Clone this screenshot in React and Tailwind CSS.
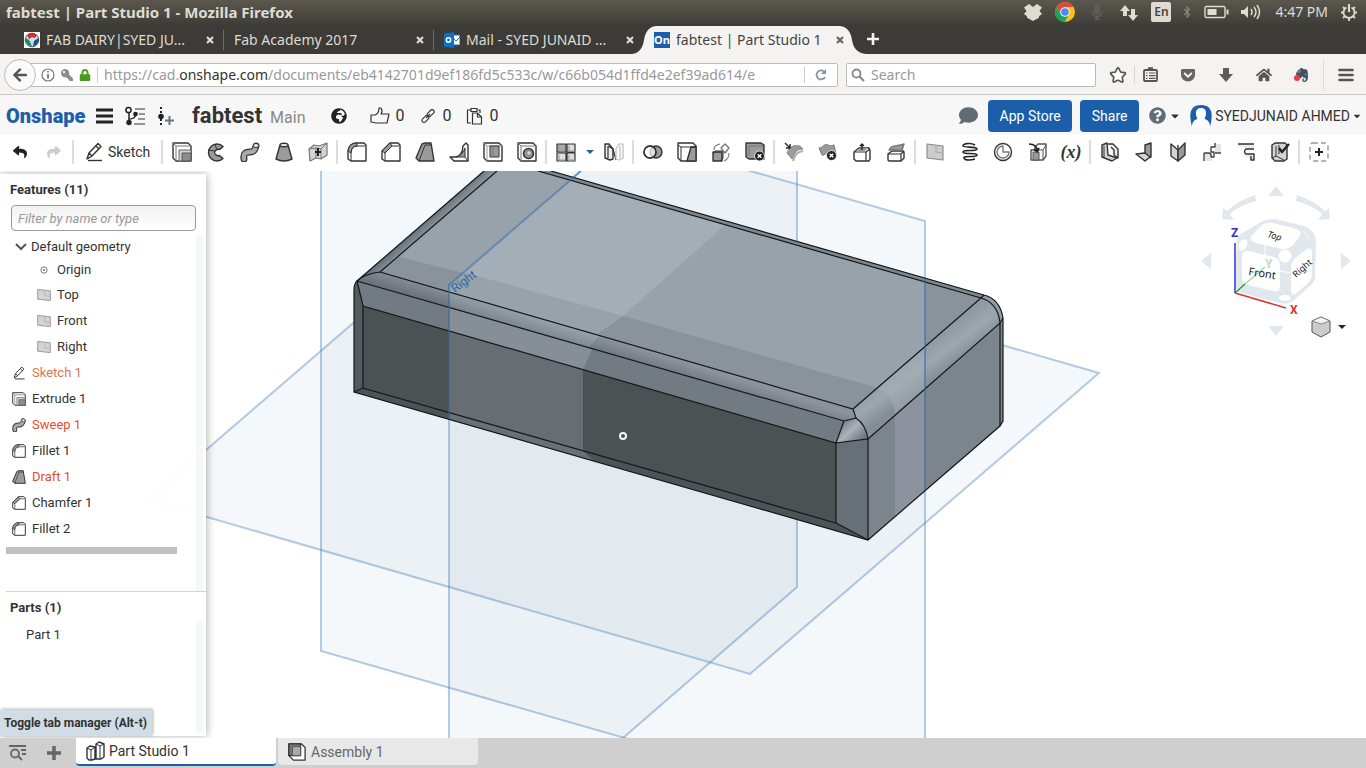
import React, { useState } from "react";
import {
  FaReply, FaShare, FaComment, FaQuestionCircle, FaCaretDown, FaKey, FaLock, FaStar, FaGetPocket,
  FaHome, FaEvernote, FaBluetoothB, FaGlobeAfrica, FaArrowLeft, FaMicrophone,
} from "react-icons/fa";

const G = "#9b9b9b";
const L = "#d4d4d4";

// 20x20 line icon base
const Icon = ({ children, className = "size-5" }) => (
  <svg viewBox="0 0 20 20" className={`${className} shrink-0`} fill="none" stroke="#333" strokeWidth="1.4" strokeLinejoin="round" aria-hidden="true">
    {children}
  </svg>
);

const box = "M1 4V1h15l3 3v15H4l-3-3z";

const icons = {
  sketch: <><path d="M3 17 5 11 14 1.5l3 3L8 14z M5 11l3 3M12 4l3 3" /><path d="M4 18.5h14" /></>,
  extrude: <><path d={box} fill="#fff" /><path d="M4 19V4h15M1 1l3 3" stroke="#777" strokeWidth="1" /><path d="M7 8h12v11H7z" fill={L} stroke="#666" strokeWidth="1" /><path d="M10 11h9v8h-9z" fill="#8c8c8c" stroke="#555" strokeWidth="1" /></>,
  revolve: <><path d="M17 4.500A8.500 8.500 0 1 0 17 16.500l-3.500-3a3.800 3.800 0 0 1-5-3 3.800 3.800 0 0 1 5-3z" fill={G} /><path d="M9 2l1.500 5M17 4.500l-3 3M2 8l6.500 1" strokeWidth="1" /></>,
  sweep: <><path d="M4 17c-1-6 2-7 6-7s5-2 6-6" strokeWidth="7" strokeLinecap="round" /><path d="M4 17c-1-6 2-7 6-7s5-2 6-6" stroke="#aaa" strokeWidth="4.400" strokeLinecap="round" /><ellipse cx="16" cy="3.500" rx="2.600" ry="2" fill="#eee" strokeWidth="1" /></>,
  loft: <><path d="M6 3 2 17q8 4 16 0L14 3" fill={G} /><ellipse cx="10" cy="3" rx="4" ry="1.800" fill="#eee" /></>,
  thicken: <><path d="M1 7l5-4 5 1 8-3v12l-6 4-5-1-6 3z" fill={L} stroke="#777" strokeWidth="1.200" /><path d="M1 7l7-1 5 1 6-6M8 6v10M13 7v10" stroke="#777" strokeWidth="1" /><path d="M10 6v8M7 10h6" stroke="#222" strokeWidth="2" /></>,
  fillet: <><path d="M1 9q1-8 9-8h7l2 2v16H4l-3-2z" fill="#fff" /><path d="M4 19v-8q0-7 7-7h7" strokeWidth="1" /><path d="M1 9q1-8 9-8v3q-6 0-6 7z" fill={G} strokeWidth="1" /></>,
  chamfer: <><path d="M1 9 9 1h8l2 2v16H4l-3-2z" fill="#fff" /><path d="M4 19v-8l7-7h7" strokeWidth="1" /><path d="M1 9 9 1l2 3-7 7z" fill={G} strokeWidth="1" /></>,
  draft: <><path d="M1 16 7 2l3-1h6l3 18H4z" fill={G} /><path d="M4 19 10 3h6M1 16l3 3" strokeWidth="1" /></>,
  rib: <><path d="M14 4l3-3 2 2v16H5l-4-4h5c4 0 8-4 8-11z" fill="#fff" /><path d="M16 6v9H7q7-2 9-9z" fill={G} strokeWidth="1" /><path d="M16 15l3 4" strokeWidth="1" /></>,
  shell: <><path d={box} fill="#fff" /><path d="M4 19V4h15M1 1l3 3" stroke="#999" strokeWidth="1" /><path d="M7 4h9v11H7z" fill={G} strokeWidth="1" /><path d="M10 4v11" strokeWidth="1" stroke="#777" /></>,
  hole: <><path d={box} fill="#fff" /><path d="M4 19V4h15M1 1l3 3" stroke="#777" strokeWidth="1" /><circle cx="11.500" cy="11.500" r="5" fill={G} strokeWidth="1.600" /><circle cx="12" cy="11" r="2.500" fill={L} stroke="#777" strokeWidth="1" /></>,
  pattern: <><g fill="#ddd" strokeWidth="1.200"><path d="M1 2h9v8H1z" fill="#aaa" /><path d="M11 2h8v8h-8zM1 11h9v8H1zM11 11h8v8h-8z" /></g><path d="M3 4v5h6M13 4v5h6M3 13v5h6M13 13v5h6" stroke="#999" strokeWidth="1" /></>,
  mirror: <><path d="M1 2h4l4 5v10l-3 1-5-2z" fill="#eee" /><path d="M4 4v12M4 4l5 3M9 7l3 11" strokeWidth="1.200" /><path d="M19 2h-4l-3 5v10l3 1 4-2zM16 4v12" fill="#fff" stroke="#bbb" strokeWidth="1.200" /></>,
  boolean: <><circle cx="13" cy="10" r="6" fill={G} /><circle cx="7" cy="10" r="6" fill="#fff" fillOpacity=".7" /><circle cx="7" cy="10" r="6" /></>,
  split: <><path d={box} fill="#fff" /><path d="M14 5h5v14H10z" fill={G} /><path d="M4 19V5h14l1-2M4 5 1 3" strokeWidth="1" /></>,
  transform: <><path d="M2 10h9v9H2z" fill={G} /><path d="M2 12l2-3h8v7l-2 3" strokeWidth="1" /><path d="M14 2l4 4-4 5-4-5z" fill="#fff" stroke="#777" /><path d="M3 8q0-5 6-6M18 11q0 6-5 8" stroke="#777" strokeWidth="1.100" /></>,
  delete: <><path d="M1 3V1h15l3 2v14H4l-3-2z" fill={G} /><path d="M4 14V4h14" stroke="#777" strokeWidth="1" /><circle cx="14.500" cy="14" r="5" fill="#222" stroke="#fff" strokeWidth=".8" /><path d="M12.700 12.200l3.600 3.600M16.300 12.200l-3.600 3.600" stroke="#fff" /></>,
  bridge: <><path d="M3 11c3-7 6-8 13-7l3 3c-6 0-8 3-11 10z" fill={G} stroke="#888" strokeWidth="1" /><path d="M9 19c2-7 4-9 10-10" stroke="#aaa" strokeWidth="2" /><path d="M1 1l5 5M6 2v4H2" stroke="#222" /></>,
  surfDelete: <><path d="M1 6c4 0 5-5 9-3s6-1 6 0l2 9c-5 0-6-2-9-1s-3 3-5 2z" fill={G} stroke="#777" strokeWidth="1" /><circle cx="13.500" cy="13.500" r="5" fill="#222" stroke="#fff" strokeWidth=".8" /><path d="M11.700 11.700l3.600 3.600M15.300 11.700l-3.600 3.600" stroke="#fff" /></>,
  moveFace: <><path d="M2 10l5-4h10l1 3v8l-1 2H4l-2-2z" fill="#fff" /><path d="M2 10h12l4-3M14 10v9" strokeWidth="1.200" /><path d="M5 9l4-3h7l-3 3z" fill={G} stroke="none" /><path d="M10 8V2M8 4l2-2 2 2" stroke="#222" /></>,
  replace: <><path d="M2 12l4-3h11l1 1v6l-3 3H3l-1-1z" fill="#fff" /><path d="M2 12h13l3-3M15 12v7" strokeWidth="1.200" /><path d="M3 8c3-6 7-3 15-6l-2 6c-5 1-7-1-13 0z" fill={G} stroke="#777" /></>,
  plane: <><path d="M2 2l16 2v14L2 16z" fill="#ccc" stroke="#888" strokeWidth="1.100" /><path d="M11 4v6l7 1" stroke="#aaa" strokeWidth="1" /></>,
  helix: <path d="M16 3c-5-3-13-1-12 1s14 0 14 3-14 0-14 3 14 0 14 3-14 0-13 3 8 2 11 1" stroke="#222" strokeWidth="1.600" />,
  curve: <><circle cx="10" cy="10" r="8.500" /><path d="M10 4v6h6a6 6 0 1 1-6-6z" stroke="#777" /></>,
  derived: <><path d="M4 8h4V5l3-3h8v12l-3 4H4z" fill="#fff" stroke="#555" /><path d="M8 8h8v10M16 8l3-5" stroke="#555" strokeWidth="1" /><path d="M6 10h6v8H6z" fill={G} stroke="#555" strokeWidth="1" /><path d="M2 2c5 0 8 2 8 7M7 7l3 3 2-4" stroke="#222" strokeWidth="1.700" /></>,
  sheet: <><path d="M2 3l5-2 1 12 9 3-5 3-10-4z" fill={L} /><path d="M8 2h5l5 5v9l-4-3V8l-3-3" fill="#eee" /><path d="M4 4v11" strokeWidth="1" /></>,
  flange: <><path d="M11 3l6-2v14l-6 2z" fill="#999" /><path d="M2 12l9-1 5 4-5 4z" fill={L} /></>,
  hem: <><path d="M3 2l7 6v11l-7-5z" fill={L} /><path d="M10 8l7-7v12l-7 6z" fill="#999" /><path d="M10 8V3" /></>,
  tab: <><path d="M3 10h7v9H3zM13 2h6v9h-6z" fill="#e5e5e5" stroke="none" /><path d="M2 11h4q4 0 3 4h3v-5h-3V5h4V1M2 19v-8M13 11h6" stroke="#444" /></>,
  flat: <><path d="M2 2h16v5H9v5h9v6h-4l-2-3H8V5H2z" fill="#ebebeb" stroke="none" /><path d="M2 2h16M18 7H10q-3 3 0 5h8v6h-3v-4" stroke="#333" /></>,
  finish: <><path d="M2 3l3-2h10l2 2v14l-3 2H5l-3-3z" fill={L} /><path d="M6 4v10l8 4M6 14l-4 2M9 3v9" strokeWidth="1" /><path d="M9 6l3 4 7-8" stroke="#222" strokeWidth="2.400" /></>,
};

const groups = [
  ["extrude", "revolve", "sweep", "loft", "thicken"],
  ["fillet", "chamfer", "draft", "rib", "shell", "hole"],
  ["pattern", "caret", "mirror"],
  ["boolean", "split", "transform", "delete"],
  ["bridge", "surfDelete", "moveFace", "replace"],
  ["plane", "helix", "curve", "derived", "variable"],
  ["sheet", "flange", "hem", "tab", "flat", "finish"],
];

const Sep = () => <div className="ml-px mr-0.5 h-6 w-0.5 shrink-0 bg-[#dcdcdc]" />;

const features = [
  { icon: "sketch", name: "Sketch 1", color: "text-[#e8704e]" },
  { icon: "extrude", name: "Extrude 1" },
  { icon: "sweep", name: "Sweep 1", color: "text-[#e0502c]" },
  { icon: "fillet", name: "Fillet 1" },
  { icon: "draft", name: "Draft 1", color: "text-[#e0502c]" },
  { icon: "chamfer", name: "Chamfer 1" },
  { icon: "fillet", name: "Fillet 2" },
];

const TitleBar = () => (
  <div className="flex h-6 shrink-0 items-center gap-3 bg-linear-to-b from-[#5b584d] to-[#3f3e39] pl-1.5 pr-2 font-['Noto_Sans',sans-serif] text-[#dfdbd2]">
    <h1 className="flex-1 truncate text-[15px] font-bold leading-5">fabtest | Part Studio 1 - Mozilla Firefox</h1>
    <svg viewBox="0 0 20 20" className="size-5" fill="currentColor">
      <path d="M6 2l4 3 4-3 5 3.500L16.500 9l2.500 3-3 2.200v1.600L10 19l-6-3.200v-1.600L1 12l2.500-3L1 5.500z" />
    </svg>
    <svg viewBox="0 0 20 20" className="size-5">
      <circle cx="10" cy="10" r="10" fill="#fbc116" />
      <path d="M1.400 5A10 10 0 0 1 18.700 5H10L5.700 12.500z" fill="#dd4b3e" />
      <path d="M1.400 5A10 10 0 0 0 9.500 20l4.500-7.500H5.700z" fill="#1ba261" />
      <circle cx="10" cy="10" r="4.800" fill="#f4f4f4" />
      <circle cx="10" cy="10" r="3.800" fill="#4a8af4" />
    </svg>
    <FaMicrophone className="h-4 w-5 text-[#5f5d57]" />
    <svg viewBox="0 0 20 20" className="size-5" fill="currentColor">
      <path d="M6 3 1 9h3v5h4V9h3zM14 19l5-6h-3V7h-4v6H9z" />
    </svg>
    <span className="flex size-5 items-center justify-center rounded-xs bg-[#dfdbd2] text-xs font-semibold text-[#45443f]">En</span>
    <FaBluetoothB className="h-4 w-2 text-[#8b8880]" />
    <svg viewBox="0 0 26 14" className="h-3.5 w-[26px]" fill="none" stroke="currentColor" strokeWidth="1.400">
      <rect x="2" y="1.500" width="20" height="11" rx="1.500" />
      <path d="M24.500 4.500v5" strokeWidth="2" />
      <path d="M4.500 4h9v6h-9z" fill="currentColor" stroke="none" />
    </svg>
    <svg viewBox="0 0 20 18" className="h-4.5 w-5" fill="none" stroke="currentColor" strokeWidth="1.500">
      <path d="M0 7h3l4-4v12l-4-4H0z" fill="currentColor" stroke="none" />
      <path d="M10 6q2 3 0 6M13 4q4 5 0 10M16 2q5 7 0 14" />
    </svg>
    <time className="ml-0.5 text-sm">4:47 PM</time>
    <svg viewBox="0 0 18 18" className="size-4.5" fill="none" stroke="currentColor">
      <path d="M6.500 4.500A5.500 5.500 0 1 0 11.500 4.500" strokeWidth="1.800" />
      <path d="M9 1v8" strokeWidth="2" />
      <path d="M1 9.500h3M14 9.500h3M3 4l2 2M15 4l-2 2M3 15l2-2M15 15l-2-2M9 15v3" strokeWidth="1.800" />
    </svg>
  </div>
);

const browserTabs = [
  { title: "FAB DAIRY|SYED JU...", fav: "fab" },
  { title: "Fab Academy 2017" },
  { title: "Mail - SYED JUNAID ...", fav: "mail" },
  { title: "fabtest | Part Studio 1", fav: "on", active: true },
];

const Favicon = ({ kind }) => {
  if (kind === "fab")
    return (
      <svg viewBox="0 0 16 16" className="size-4 shrink-0">
        <path d="M0 0h16v16H0z" fill="#fff" />
        <circle cx="8" cy="8" r="6.800" fill="#cde" stroke="#356" />
        <path d="M3 3q5-4 10 0l-2 3-3-1-3 2z" fill="#d92b2b" />
        <path d="M1.500 6 5 8l3 6q-6 0-6.500-8z" fill="#178a55" />
        <path d="M14.500 6 10 9l-1 5q6-1 5.500-8z" fill="#1f4f80" />
      </svg>
    );
  if (kind === "mail")
    return (
      <svg viewBox="0 0 16 16" className="size-4 shrink-0">
        <path d="M8 3h8v10H8z" fill="#fff" stroke="#0a72c6" />
        <path d="M8 5l4 4 4-4" fill="none" stroke="#0a72c6" />
        <path d="M0 1.500 10 0v16L0 14.500z" fill="#0a72c6" />
        <circle cx="4.500" cy="8" r="2.200" fill="none" stroke="#fff" strokeWidth="1.500" />
      </svg>
    );
  return <span className="flex size-4 shrink-0 items-center justify-center bg-[#1b5faa] text-[11px] font-bold text-white">On</span>;
};

const TabStrip = () => (
  <div className="flex h-[30px] shrink-0 items-end bg-[#3c3b37] pl-3.5 font-['Noto_Sans',sans-serif] text-sm text-[#dfdbd2]">
    {browserTabs.map((t, i) => (
      <div key={t.title} className="relative flex h-7 w-[210px] items-center gap-1.5 px-2.5">
        {t.active && (
          <svg viewBox="0 0 234 28" preserveAspectRatio="none" className="absolute -left-3 top-0 h-full w-[234px]" aria-hidden="true">
            <path d="M0 28q10-1 12-14T24 0h184q10 1 12 14t14 14z" fill="#f4f3f2" />
          </svg>
        )}
        {t.fav && <span className="relative"><Favicon kind={t.fav} /></span>}
        <span className={`relative flex-1 overflow-hidden whitespace-nowrap ${t.active ? "text-[#444]" : ""}`}>{t.title}</span>
        <button aria-label={`Close ${t.title}`} className={`relative ${t.active ? "text-[#666]" : ""}`}>
          <svg viewBox="0 0 8 8" className="size-2" stroke="currentColor" strokeWidth="2.200"><path d="M1 1l6 6M7 1 1 7" /></svg>
        </button>
        {i < 2 && <span className="absolute right-0 top-1 h-5 w-px bg-[#6f6e69]" />}
      </div>
    ))}
    <button aria-label="New tab" className="mb-2 ml-3">
      <svg viewBox="0 0 14 14" className="size-3.5" stroke="#f4f3f2" strokeWidth="2.600"><path d="M7 1v12M1 7h12" /></svg>
    </button>
  </div>
);

const NavBar = () => (
  <div className="flex h-[41px] shrink-0 items-center border-b border-[#c8c8c6] bg-[#f4f3f2] pl-1 pr-3 pt-px font-['Noto_Sans',sans-serif] text-sm text-[#555]">
    <button aria-label="Back" className="z-10 flex size-8 shrink-0 items-center justify-center rounded-full border border-[#bbb] bg-[#fafafa]">
      <FaArrowLeft className="size-4" />
    </button>
    <div className="-ml-2 flex h-6 min-w-0 flex-1 items-center rounded-r-xs border border-[#bbb] bg-white pl-3">
      <svg viewBox="0 0 14 14" className="size-3.5 shrink-0" fill="none" stroke="#777" strokeWidth="1.200">
        <circle cx="7" cy="7" r="6" />
        <path d="M7 6v4.500M7 3v1.500" strokeWidth="1.800" />
      </svg>
      <FaKey className="ml-1.5 size-3 shrink-0 -scale-x-100 text-[#8c8c8c]" />
      <FaLock className="ml-1.5 size-3 shrink-0 text-[#4c9a22]" />
      <span className="ml-1.5 h-4 w-px shrink-0 bg-[#ccc]" />
      <div role="textbox" aria-label="Address" contentEditable suppressContentEditableWarning className="ml-1.5 min-w-0 flex-1 overflow-hidden whitespace-nowrap text-[#999] outline-none">
        https://cad.<span className="text-[#333]">onshape.com</span>/documents/eb4142701d9ef186fd5c533c/w/c66b054d1ffd4e2ef39ad614/e
      </div>
      <span className="ml-6 h-4 w-px shrink-0 bg-[#ccc]" />
      <button aria-label="Reload" className="px-2.5">
        <svg viewBox="0 0 12 12" className="size-3" fill="none" stroke="#8795a1" strokeWidth="1.800">
          <path d="M10 8A4.500 4.500 0 1 1 9 2.500" />
          <path d="M11 0v5H6z" fill="#8795a1" stroke="none" />
        </svg>
      </button>
    </div>
    <label className="ml-2 flex h-6 w-[250px] items-center gap-1.5 rounded-xs border border-[#bbb] bg-white pl-1">
      <svg viewBox="0 0 14 14" className="size-3.5" fill="none" stroke="#888" strokeWidth="1.800"><circle cx="5.500" cy="5.500" r="4" /><path d="M8.500 8.500 13 13" strokeWidth="2.200" /></svg>
      <input aria-label="Search" placeholder="Search" className="min-w-0 flex-1 outline-none placeholder:text-[#999]" />
    </label>
    <button aria-label="Bookmark" className="ml-3.5">
      <FaStar className="size-4 overflow-visible fill-white stroke-[#555] stroke-[60px]" />
    </button>
    <span className="ml-2 h-4.5 w-px bg-[#d5d5d5]" />
    <button aria-label="Bookmarks list" className="ml-2">
      <svg viewBox="0 0 15 15" className="size-[15px]" fill="none" stroke="#555" strokeWidth="1.800">
        <rect x="1" y="3" width="13" height="11" rx="1" />
        <path d="M5 1.500h5" strokeWidth="2.500" />
        <path d="M3 6h1.500M6 6h6.500M3 8.700h1.500M6 8.700h6.500M3 11.300h1.500M6 11.300h6.500" strokeWidth="1.200" />
      </svg>
    </button>
    <button aria-label="Pocket" className="ml-[22px]"><FaGetPocket className="size-4 text-[#666]" /></button>
    <button aria-label="Downloads" className="ml-[22px]">
      <svg viewBox="0 0 16 16" className="size-4" fill="#5c5c5c"><path d="M5 1h6v6h4l-7 8-7-8h4z" /></svg>
    </button>
    <button aria-label="Home" className="ml-[22px]"><FaHome className="size-4" /></button>
    <button aria-label="Evernote" className="relative ml-[22px]">
      <FaEvernote className="size-4 text-[#44535b]" />
      <span className="absolute bottom-0.5 left-0 size-1.5 rounded-full bg-[#fb3449]" />
    </button>
    <span className="ml-[13px] h-8 w-px bg-[#dcdcdc]" />
    <button aria-label="Menu" className="ml-3.5">
      <svg viewBox="0 0 16 14" className="h-3.5 w-4" stroke="#555" strokeWidth="2.600" strokeLinecap="round"><path d="M1.500 2h13M1.500 7h13M1.500 12h13" /></svg>
    </button>
  </div>
);

const DocHeader = () => (
  <header className="flex h-10 shrink-0 items-center bg-[#f7f7f7] pl-1.5 pr-1 pt-px text-[#333]">
    <a href="#" className="w-[78px] text-xl font-black leading-6 text-[#1b5faa]">Onshape</a>
    <button aria-label="Menu" className="ml-3">
      <svg viewBox="0 0 17 16" className="h-4 w-[17px]" stroke="#222" strokeWidth="3"><path d="M0 2h17M0 8h17M0 14h17" /></svg>
    </button>
    <button aria-label="Versions" className="ml-3">
      <svg viewBox="0 0 20 20" className="size-5" fill="none" stroke="#222" strokeWidth="1.500">
        <circle cx="3.500" cy="4" r="2.600" /><circle cx="10.500" cy="8" r="1.600" fill="#222" /><circle cx="4" cy="16.500" r="2" fill="#222" />
        <path d="M4 7v8M4 13q6 0 6.500-4" /><path d="M10 3h10M14 8h6M13 13h7M9 18h11" stroke="#667784" />
      </svg>
    </button>
    <button aria-label="Create version" className="ml-3">
      <svg viewBox="0 0 17 20" className="h-5 w-[17px]" fill="none" stroke="#222" strokeWidth="2">
        <path d="M4 1v19" strokeDasharray="2 2" /><circle cx="4" cy="10.500" r="2.800" fill="#222" stroke="none" /><path d="M12.500 10v9M8 14.500h9" stroke="#667784" />
      </svg>
    </button>
    <h2 className="ml-[18px] text-[22px] font-bold leading-7">fabtest</h2>
    <span className="ml-2 mt-1 text-base text-[#888]">Main</span>
    <FaGlobeAfrica className="ml-[25px] size-4 text-[#222]" />
    <button aria-label="Likes" className="ml-[23px] flex items-center gap-1.5 text-base">
      <Icon><path d="M1 9h4c3-1 4-4 4-7h2q2 3 0 6h8l-2 9H6l-5-1z" strokeWidth="1.200" /></Icon>0
    </button>
    <button aria-label="Links" className="ml-4 flex items-center gap-2 text-base">
      <svg viewBox="0 0 14 14" className="size-3.5" fill="none" stroke="#333" strokeWidth="1.100"><rect x="5.500" y="2" width="8" height="4" rx="2" transform="rotate(-45 9.700 3.800)" /><rect x="0.300" y="8" width="8" height="4" rx="2" transform="rotate(-45 4.300 9.800)" /><path d="M5 9l4-4" /></svg>0
    </button>
    <button aria-label="Copies" className="ml-3.5 flex items-center gap-1.5 text-base">
      <svg viewBox="0 0 18 18" className="size-[18px]" fill="none" stroke="#333" strokeWidth="1.200"><path d="M5 16H1.500V3h3M12 3h2v3M5 1.500h6v3H5zM6.500 6h5l4 4v7h-9zM11.500 6v4h4" /></svg>0
    </button>
    <div className="flex-1" />
    <button aria-label="Comments"><FaComment className="size-[19px] text-[#5f6c76]" /></button>
    <button className="ml-2.5 h-8 w-21 rounded bg-[#1b5faa] text-sm text-white">App Store</button>
    <button className="ml-2 h-8 w-[59px] rounded bg-[#1b5faa] text-sm text-white">Share</button>
    <button aria-label="Help" className="ml-2.5 flex items-center gap-[3px]">
      <FaQuestionCircle className="size-[17px] text-[#5f6c76]" /><FaCaretDown className="size-3" />
    </button>
    <button className="ml-2 flex items-center gap-0.5 text-sm">
      <svg viewBox="0 0 24 24" className="size-6"><path d="M3 23q-6-22 9-22t9 22z" fill="#1b5faa" /><path d="M12 4c6 0 6 6 3.500 11 4 1 5 3 6 9H2.500c1-6 2-8 6-9C6 10 6 4 12 4z" fill="#fff" /></svg>
      <span>SYEDJUNAID AHMED</span><FaCaretDown className="size-2.5" />
    </button>
  </header>
);

const Toolbar = () => (
  <div className="flex h-9 shrink-0 items-center bg-white pb-0.5 pl-[3px]">
    <button aria-label="Undo" className="flex w-[34px] justify-center"><FaReply className="size-3.5 text-[#222]" /></button>
    <button aria-label="Redo" className="flex w-[34px] justify-center"><FaShare className="size-3.5 text-[#ccc]" /></button>
    <Sep />
    <button className="flex w-21 items-center gap-1 pl-2 text-sm text-[#333]"><Icon>{icons.sketch}</Icon>Sketch</button>
    {groups.map((g, i) => (
      <React.Fragment key={i}>
        <Sep />
        {g.map((n) =>
          n === "caret" ? (
            <button key={n} aria-label="More patterns" className="flex w-3.5 justify-center">
              <svg viewBox="0 0 8 4" className="h-1 w-2"><path d="M0 0h8L4 4z" fill="#1b5faa" /></svg>
            </button>
          ) : (
            <button key={n} aria-label={n} className="flex w-[34px] justify-center">
              {n === "variable" ? <span className="font-['Liberation_Serif',serif] text-lg font-bold italic leading-5 text-[#333]">(x)</span> : <Icon>{icons[n]}</Icon>}
            </button>
          )
        )}
      </React.Fragment>
    ))}
    <Sep />
    <button aria-label="Add custom feature" className="flex w-[34px] justify-center">
      <Icon><rect x="1" y="1" width="18" height="18" rx="3" stroke="#999" strokeDasharray="5 3" /><path d="M10 6v8M6 10h8" stroke="#222" strokeWidth="2" /></Icon>
    </button>
  </div>
);

const Model = () => (
  <svg viewBox="0 171 1366 567" preserveAspectRatio="xMidYMid slice" className="col-start-1 row-start-1 size-full min-h-0" role="img" aria-label="Part model">
    <defs>
      <linearGradient id="band" gradientUnits="userSpaceOnUse" x1="600" y1="336" x2="595" y2="352">
        <stop offset="0" stopColor="#8b949b" /><stop offset="1" stopColor="#6c757d" />
      </linearGradient>
      <linearGradient id="bandLight" gradientUnits="userSpaceOnUse" x1="600" y1="336" x2="595" y2="352">
        <stop offset="0" stopColor="#98a3ab" /><stop offset="1" stopColor="#7d868e" />
      </linearGradient>
      <linearGradient id="side" gradientUnits="userSpaceOnUse" x1="415" y1="231" x2="424" y2="241">
        <stop offset="0" stopColor="#69737b" /><stop offset="1" stopColor="#97a2aa" />
      </linearGradient>
      <linearGradient id="round" gradientUnits="userSpaceOnUse" x1="914" y1="353" x2="934" y2="380">
        <stop offset="0" stopColor="#8f99a1" /><stop offset=".5" stopColor="#9ca7af" /><stop offset="1" stopColor="#858e96" />
      </linearGradient>
      <linearGradient id="corner" gradientUnits="userSpaceOnUse" x1="845" y1="424" x2="860" y2="440">
        <stop offset="0" stopColor="#858c94" /><stop offset=".4" stopColor="#abb2bb" /><stop offset="1" stopColor="#727a82" />
      </linearGradient>
    </defs>

    <g fill="#5082a8" fillOpacity=".057" stroke="#3c78be" strokeOpacity=".38" strokeWidth="2">
      <path d="M148 500 497 199 1099 373 750 674z" />
      <path d="M321 48v603l604 173V221z" />
      <path d="M449 285 797-17v604L449 889z" />
    </g>

    {/* solid */}
    <path d="M357 281 484 171h67l433 124q16 4 19 23v103l-3 5-132 114-514-148V290q0-6 3-9z" fill="#7c848c" />
    <path d="M357 281 484 171h13L380 272z" fill="url(#side)" />
    <path d="M380 272 497 171h41l443 127-128 111z" fill="#98a2aa" />
    <path d="M463 272 570 180l155 45-102 91z" fill="#a3aeb6" />
    <path d="M396 256l67 17-14 12v7l-69-20zM623 316l255 72-25 21-257-74zM925 282l56 16-56 48z" fill="#8a939b" />
    <path d="M538 171h13l433 124-3 3z" fill="#7e8890" />
    <path d="M380 272 853 409l3 9-12 3-487-140q7-7 23-9z" fill="url(#band)" />
    <path d="M449 292l151 43-12 13-139-40z" fill="url(#bandLight)" />
    <path d="M357 281 844 421l-8 22-473-137z" fill="#727a82" />
    <path d="M449 308l143 41-9 21-134-39z" fill="#868e97" />
    <path d="M363 306l473 137v80L363 388z" fill="#4c5154" />
    <path d="M449 331l134 39v81l-134-38z" fill="#686c73" />
    <path d="M357 281l6 25v82l-9 4V290z" fill="#555a5e" />
    <path d="M354 392l9-4 473 135 32 17z" fill="#4e5357" />
    <path d="M449 413l134 38 11 10-145-42z" fill="#6b7077" />
    <path d="M836 443l32-4v101l-32-17z" fill="#687077" />
    <path d="M836 443l8-22 12-3q10 7 12 21z" fill="url(#corner)" />
    <path d="M853 409 981 298q17 5 19 25L868 439q-2-14-12-21z" fill="url(#round)" />
    <path d="M878 388 925 347v42l-30 25q-2-19-17-26z" fill="#a8b4bc" fillOpacity=".45" />
    <path d="M981 298l3-3q16 4 19 23l-3 5q-2-20-19-25z" fill="#929ca4" />
    <path d="M895 416l30-26v100l-30 26z" fill="#8c939e" />

    <g fill="none" stroke="#14181b" strokeWidth="1.200">
      <path d="M484 171 357 281q-3 3-3 9v102l514 148 132-114 3-5V318q-3-19-19-23L551 171" />
      <path d="M497 171 380 272 853 409 981 298 538 171M380 272q-16 2-23 9l487 140 12-3-3-9" />
      <path d="M357 281l6 25 473 137 8-22M363 306v82l473 135v-80l32-4v101M354 392l9-4M836 523l32 17" />
      <path d="M856 418q10 7 12 21l132-116v103M981 298l3-3M981 298q17 5 19 25l3-5" />
    </g>

    <g fill="none" stroke="#2c66a8" strokeOpacity=".5" strokeWidth="2">
      <path d="M581 171 449 285v134M925 279v211" />
    </g>
    <text x="455" y="293" transform="rotate(-37 455 293)" fill="#2d69ae" className="text-xs">Right</text>
    <circle cx="623" cy="436" r="3" fill="#4c5154" stroke="#f5f5f0" strokeWidth="2" />
  </svg>
);

const ViewCube = () => (
  <svg viewBox="0 0 160 160" className="col-start-1 row-start-1 mr-3 mt-2.5 size-40 justify-self-end" role="img" aria-label="View cube">
    <g fill="#e1e8ed">
      <path d="M82 5l8 10H74zM82 155l8-10H74zM7 80l10-8v16zM157 80l-10-8v16z" />
      <path d="M61 14l1 6q-18 5-26 13l4 6-12-1 1-11 4 3q10-10 28-16zM103 14l-1 6q18 5 26 13l-4 6 12-1-1-11-4 3q-10-10-28-16z" />
      <path d="M43 61q0-7 7-10l19-11q5-2 12-2l29 7q11 4 12 15l-1 36q0 5-5 9l-17 15q-5 4-13 2l-39-10q-6-3-6-9z" />
    </g>
    <g fill="#fff">
      <path d="M58 54l9-9q4-4 12-3l24 6q6 3 2 8l-6 8q-5 5-12 4l-25-6q-8-3-4-8z" />
      <path d="M48 76q0-7 7-6l25 6q6 2 6 8v21q0 7-7 5l-25-6q-6-2-6-8z" />
      <path d="M97 87q0-6 4-10l12-9q5-2 5 4v21q0 5-4 9l-11 10q-6 4-6-4z" />
      <circle cx="91" cy="75" r="6.500" /><ellipse cx="49" cy="64" rx="4" ry="6" transform="rotate(25 49 64)" /><ellipse cx="91" cy="117" rx="6" ry="3" />
    </g>
    <path d="M71 62v12M86 90l11 2M109 50l7 8" stroke="#fff" />
    <path d="M41 112V62" stroke="#3030e0" strokeWidth="1.500" />
    <path d="M41 112l51 15" stroke="#e03030" strokeWidth="1.500" />
    <path d="M41 112l10-9" stroke="#28a028" strokeWidth="1.500" />
    <path d="M51 103l20-17" stroke="#a5dba5" strokeWidth="1.500" />
    <g className="text-xs font-bold">
      <text x="37" y="56" fill="#3030e0">Z</text>
      <text x="96" y="133" fill="#e03030">X</text>
      <text x="71" y="87" fill="#b4e0b8">Y</text>
    </g>
    <g fill="#222" className="font-['Noto_Sans',sans-serif]">
      <text x="54" y="94" transform="rotate(9 54 94)" className="text-[11px]">Front</text>
      <text x="73" y="56" transform="rotate(16 73 56)" className="text-[9px] italic">Top</text>
      <text x="102" y="97" transform="rotate(-42 102 97)" className="text-[9px]">Right</text>
    </g>
    <path d="M118 140l9-4 9 4v11l-9 5-9-5z" fill="#ccc" stroke="#555" />
    <path d="M118 140l9-4 9 4-9 3z" fill="#f2f2f2" stroke="#888" />
    <path d="M144 144h8l-4 4z" fill="#222" />
  </svg>
);

const Sidebar = () => {
  const [filter, setFilter] = useState("");
  return (
    <aside className="relative col-start-1 row-start-1 mb-0.5 mt-[3px] flex w-[206px] min-h-0 flex-col bg-white/95 text-[13px] text-[#333] shadow-[1px_0_8px_rgba(0,0,0,0.3)]">
      <div className="flex min-h-0 flex-1 flex-col">
        <h3 className="px-2.5 pt-[7px] font-bold leading-[18px]">Features (11)</h3>
        <input
          aria-label="Filter features"
          value={filter}
          onChange={(e) => setFilter(e.target.value)}
          placeholder="Filter by name or type"
          className="mx-[11px] mt-1.5 h-[26px] w-[185px] rounded border border-[#999] bg-linear-to-b from-[#f2f2f2] to-white px-1.5 italic outline-none placeholder:text-[#999]"
        />
        <div className="mr-[3px] mt-1 min-h-0 flex-1 border-r-[7px] border-[#f5f7f9]">
          <button className="flex h-[23px] items-center gap-1 pl-[15px] pt-px">
            <svg viewBox="0 0 12 8" className="h-2 w-3" fill="none" stroke="#555" strokeWidth="2"><path d="M1 1l5 5 5-5" /></svg>
            Default geometry
          </button>
          <ul>
            {["Origin", "Top", "Front", "Right"].map((n) => (
              <li key={n} className="flex h-[26px] items-center gap-1.5 pl-[37px] first:h-6">
                {n === "Origin" ? (
                  <Icon className="size-3.5"><circle cx="10" cy="10" r="4.500" stroke="#777" /><circle cx="10" cy="10" r="1.500" fill="#777" stroke="none" /></Icon>
                ) : (
                  <Icon className="size-3.5"><path d="M1 2l18 2v14L1 16z" fill={L} stroke="#999" /><path d="M11 4v7l7 1" stroke="#b5b5b5" /></Icon>
                )}
                {n}
              </li>
            ))}
            {features.map((f) => (
              <li key={f.name} className={`flex h-[26px] items-center gap-1.5 pl-3 ${f.color || ""}`}>
                <Icon className="size-3.5">{icons[f.icon]}</Icon>
                {f.name}
              </li>
            ))}
          </ul>
          <div className="ml-1.5 mt-[5px] h-[7px] w-[171px] bg-[#c0c0c0]" />
        </div>
      </div>
      <div className="flex h-[145px] shrink-0 flex-col">
        <h3 className="ml-1.5 border-t border-[#ccd6e0] pl-1 pt-[7px] font-bold leading-[18px]">Parts (1)</h3>
        <div className="mb-1 mr-[3px] mt-1 flex-1 border-r-[7px] border-[#f5f7f9] pl-[26px] pt-1">Part 1</div>
      </div>
      <div role="tooltip" className="absolute bottom-0 left-0 flex h-[26px] w-[152px] items-center whitespace-nowrap bg-[#d1dce6] pl-1 text-xs font-bold shadow-[1px_-1px_3px_rgba(0,0,0,0.3)]">
        Toggle tab manager (Alt-t)
      </div>
    </aside>
  );
};

const BottomTabs = () => (
  <nav className="flex h-[30px] shrink-0 items-start bg-[#cfcfcf] text-sm">
    <button aria-label="Tab manager" className="flex h-full w-[34px] items-center justify-center">
      <svg viewBox="0 0 17 16" className="h-4 w-[17px]" fill="none" stroke="#666" strokeWidth="1.800"><path d="M0 1h17M12 5h5M13 9h4" /><circle cx="6" cy="8.500" r="4" /><path d="M9 11l4 4" /></svg>
    </button>
    <button aria-label="Add tab" className="flex h-full w-10 items-center justify-center">
      <svg viewBox="0 0 14 14" className="size-3.5" stroke="#666" strokeWidth="3.500"><path d="M7 0v14M0 7h14" /></svg>
    </button>
    <button className="ml-0.5 flex h-7 w-[200px] items-center gap-[3px] rounded-b border-b-2 border-[#1b5faa] bg-white pl-2.5 text-[#333]">
      <Icon><path d="M1 7l3-2 5 1v12l-3 1H3l-2-2zM10 3l3-2 5 2v13l-3 2h-5z" fill="#fff" /><path d="M1 7l4 2v10M9 6 5 9M10 3l4 2v13M18 3l-4 2" strokeWidth="1" /></Icon>
      Part Studio 1
    </button>
    <button className="ml-0.5 flex h-[27px] w-[200px] items-center gap-[5px] rounded-b bg-[#e8e8e8] pl-2.5 text-[#666]">
      <Icon className="size-[18px]"><path d="M1 1h14l4 4v14H6l-5-5z" fill="#fff" /><path d="M1 1h13v13H1z" fill="#777" /><path d="M5 4h9v10H5z" fill="#aaa" stroke="#555" strokeWidth="1" /></Icon>
      Assembly 1
    </button>
  </nav>
);

export default function App() {
  return (
    <div className="flex h-screen flex-col overflow-hidden bg-white font-[Roboto,sans-serif]">
      <TitleBar />
      <TabStrip />
      <NavBar />
      <DocHeader />
      <Toolbar />
      <main className="grid min-h-0 flex-1 grid-cols-1 grid-rows-[minmax(0,1fr)] overflow-hidden">
        <Model />
        <ViewCube />
        <Sidebar />
      </main>
      <BottomTabs />
    </div>
  );
}
